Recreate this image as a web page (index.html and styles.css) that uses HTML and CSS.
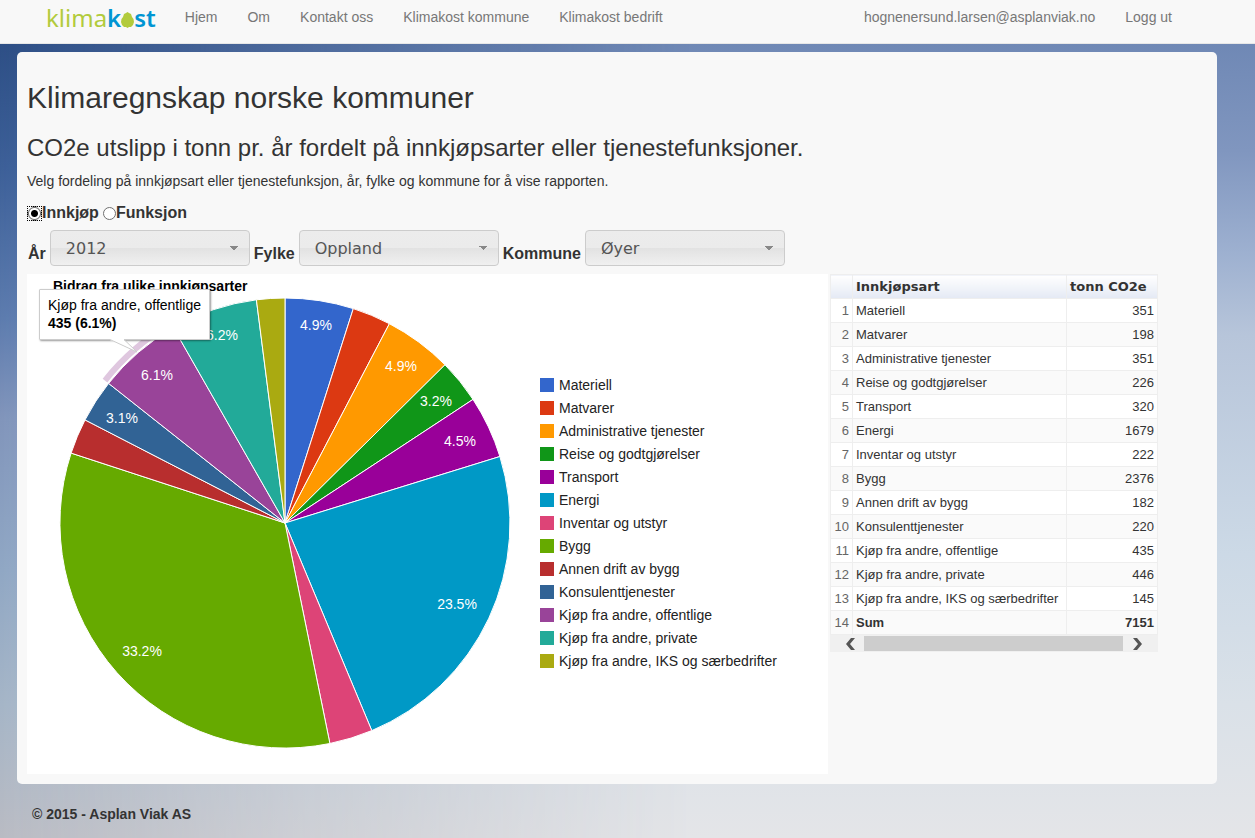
FILE: index.html
```html
<!DOCTYPE html>
<html lang="no">
<head>
<meta charset="utf-8">
<title>Klimakost</title>
<link rel="stylesheet" href="styles.css">
</head>
<body>
<header class="navbar">
  <a class="brand" href="#" aria-label="klimakost"><span class="brand-green">klima</span><span class="brand-blue">k</span><svg class="leaf" viewBox="0 0 13 16" aria-hidden="true"><path d="M6.5 0L8 1L10 2L11 5L12.500 7L13 10L12 13L10 15H8L6.500 16L5 15H3L1 13L0 10L.5 7L2 5L3 2L5 1Z"/></svg><span class="brand-blue">st</span></a>
  <nav class="nav-main">
    <a href="#">Hjem</a>
    <a href="#">Om</a>
    <a href="#">Kontakt oss</a>
    <a href="#">Klimakost kommune</a>
    <a href="#">Klimakost bedrift</a>
  </nav>
  <nav class="nav-user">
    <a href="#">hognenersund.larsen@asplanviak.no</a>
    <a href="#">Logg ut</a>
  </nav>
</header>
<main class="panel">
  <h1>Klimaregnskap norske kommuner</h1>
  <h2>CO2e utslipp i tonn pr. år fordelt på innkjøpsarter eller tjenestefunksjoner.</h2>
  <p class="intro">Velg fordeling på innkjøpsart eller tjenestefunksjon, år, fylke og kommune for å vise rapporten.</p>
  <form>
    <div class="choices">
      <input class="focused" type="radio" name="kind" id="kind-purchase" checked><label for="kind-purchase">Innkjøp</label>
      <input class="second" type="radio" name="kind" id="kind-function"><label for="kind-function">Funksjon</label>
    </div>
    <div class="filters">
      <label for="year">År</label>
      <select id="year"><option>2012</option></select>
      <label for="county">Fylke</label>
      <select id="county"><option>Oppland</option></select>
      <label for="municipality">Kommune</label>
      <select id="municipality"><option>Øyer</option></select>
    </div>
  </form>
  <div class="report">
    <section class="chart">
      <h3>Bidrag fra ulike innkjøpsarter</h3>
      <div class="chart-body">
        <svg class="pie" viewBox="-233 -233 466 466" role="img" aria-label="Bidrag fra ulike innkjøpsarter">
          <path class="halo" d="M-180-142.4A229.5 229.5 0 0 1-113.9-199.3"/>
          <g class="slices">
            <path fill="#3366cc" d="M0 0V-225A225 225 0 0 1 68.3-214.4Z"/>
            <path fill="#dc3912" d="M0 0L68.3-214.4A225 225 0 0 1 104.4-199.3Z"/>
            <path fill="#ff9900" d="M0 0L104.4-199.3A225 225 0 0 1 160-158.2Z"/>
            <path fill="#109618" d="M0 0L160-158.2A225 225 0 0 1 188-123.6Z"/>
            <path fill="#990099" d="M0 0L188-123.6A225 225 0 0 1 214.9-66.5Z"/>
            <path fill="#0099c6" d="M0 0L214.9-66.5A225 225 0 0 1 86.8 207.6Z"/>
            <path fill="#dd4477" d="M0 0L86.8 207.6A225 225 0 0 1 44.9 220.5Z"/>
            <path fill="#66aa00" d="M0 0L44.9 220.5A225 225 0 0 1-213.9-69.9Z"/>
            <path fill="#b82e2e" d="M0 0L-213.9-69.9A225 225 0 0 1-200-103.1Z"/>
            <path fill="#316395" d="M0 0L-200-103.1A225 225 0 0 1-176.4-139.6Z"/>
            <path fill="#994499" d="M0 0L-176.4-139.6A225 225 0 0 1-111.6-195.3Z"/>
            <path fill="#22aa99" d="M0 0L-111.6-195.3A225 225 0 0 1-28.6-223.2Z"/>
            <path fill="#aaaa11" d="M0 0L-28.6-223.2A225 225 0 0 1 0-225Z"/>
          </g>
          <g class="shares">
            <text x="31" y="-193">4.9%</text>
            <text x="116" y="-152">4.9%</text>
            <text x="151" y="-117">3.2%</text>
            <text x="175" y="-77">4.5%</text>
            <text x="172" y="86">23.5%</text>
            <text x="-143" y="133">33.2%</text>
            <text x="-163" y="-100">3.1%</text>
            <text x="-128" y="-143">6.1%</text>
            <text x="-63" y="-183">6.2%</text>
          </g>
        </svg>
        <ul class="legend">
          <li><i class="key k1"></i>Materiell</li>
          <li><i class="key k2"></i>Matvarer</li>
          <li><i class="key k3"></i>Administrative tjenester</li>
          <li><i class="key k4"></i>Reise og godtgjørelser</li>
          <li><i class="key k5"></i>Transport</li>
          <li><i class="key k6"></i>Energi</li>
          <li><i class="key k7"></i>Inventar og utstyr</li>
          <li><i class="key k8"></i>Bygg</li>
          <li><i class="key k9"></i>Annen drift av bygg</li>
          <li><i class="key k10"></i>Konsulenttjenester</li>
          <li><i class="key k11"></i>Kjøp fra andre, offentlige</li>
          <li><i class="key k12"></i>Kjøp fra andre, private</li>
          <li><i class="key k13"></i>Kjøp fra andre, IKS og særbedrifter</li>
        </ul>
      </div>
      <div class="tooltip" role="tooltip">Kjøp fra andre, offentlige<br><b>435 (6.1%)</b>
        <svg class="pointer" viewBox="0 0 30 16" aria-hidden="true"><path class="pointer-fill" d="M0 0H14V2L27 14L0 2Z"/><path class="pointer-line" d="M0 1.5L27 14L14 1.5"/></svg>
      </div>
    </section>
    <div class="grid">
      <table>
        <thead><tr><th></th><th>Innkjøpsart</th><th>tonn CO2e</th></tr></thead>
        <tbody>
          <tr><td>1</td><td>Materiell</td><td>351</td></tr>
          <tr><td>2</td><td>Matvarer</td><td>198</td></tr>
          <tr><td>3</td><td>Administrative tjenester</td><td>351</td></tr>
          <tr><td>4</td><td>Reise og godtgjørelser</td><td>226</td></tr>
          <tr><td>5</td><td>Transport</td><td>320</td></tr>
          <tr><td>6</td><td>Energi</td><td>1679</td></tr>
          <tr><td>7</td><td>Inventar og utstyr</td><td>222</td></tr>
          <tr><td>8</td><td>Bygg</td><td>2376</td></tr>
          <tr><td>9</td><td>Annen drift av bygg</td><td>182</td></tr>
          <tr><td>10</td><td>Konsulenttjenester</td><td>220</td></tr>
          <tr><td>11</td><td>Kjøp fra andre, offentlige</td><td>435</td></tr>
          <tr><td>12</td><td>Kjøp fra andre, private</td><td>446</td></tr>
          <tr><td>13</td><td>Kjøp fra andre, IKS og særbedrifter</td><td>145</td></tr>
          <tr class="sum"><td>14</td><td>Sum</td><td>7151</td></tr>
        </tbody>
      </table>
      <div class="scrollbar">
        <button type="button" aria-label="Rull til venstre"><svg viewBox="0 0 12 12"><path d="M10 0H6L1 6L6 12H10L5 6Z"/></svg></button>
        <div class="thumb"></div>
        <button type="button" aria-label="Rull til høyre"><svg viewBox="0 0 12 12"><path d="M2 0H6L11 6L6 12H2L7 6Z"/></svg></button>
      </div>
    </div>
  </div>
</main>
<footer>© 2015 - Asplan Viak AS</footer>
</body>
</html>
```
FILE: styles.css
```css
* { box-sizing: border-box; }
body {
  position: relative;
  margin: 0;
  min-height: 100vh;
  font: 14px/20px "Liberation Sans", Arial, sans-serif;
  color: #333;
  background: linear-gradient(#6f88b5 5%, #8096bf 18%, #9db0d0 30%, #b7c5da 40%, #ccd9e6 66%, #dae1e8 84%, #e4e5e8 100%);
}
/* darker sky fading in from the left edge */
body::before {
  content: "";
  position: absolute;
  inset: 0;
  z-index: -1;
  background: linear-gradient(#2d4e85 5%, #3c5f98 20%, #5c7bae 38%, #8195bb 50%, #90a7c4 68%, #a5b5c7 84%, #b9bbc3 100%);
  mask-image: linear-gradient(90deg, #000, rgba(0, 0, 0, .5) 25%, transparent 55%);
}
a { text-decoration: none; }

.navbar {
  display: flex;
  height: 44px;
  padding: 0 68px 0 46px;
  align-items: flex-start;
  background: #f8f8f8;
  border-bottom: 1px solid #e7e7e7;
}
.brand { display: flex; align-items: flex-start; margin-right: 29px; font: 24px/36px "Noto Sans", sans-serif; }
.brand-green { color: #b2cb3c; }
.brand-blue { color: #0095d3; font-weight: 600; }
.leaf { width: 13px; height: 16px; margin-top: 12px; fill: #b2cb3c; }
.nav-main, .nav-user { display: flex; gap: 30px; padding-top: 7px; }
.nav-user { margin-left: auto; padding-right: 15px; }
.nav-main a, .nav-user a { color: #777; }

.panel {
  margin: 8px 38px 0 17px;
  padding: 30px 10px 10px;
  background: #f8f8f8;
  border-radius: 5px;
}
h1, h2, h3, p, ul { margin: 0; padding: 0; }
h1 { font-size: 30px; line-height: 32px; font-weight: 400; }
h2 { margin-top: 20px; font-size: 24px; line-height: 28px; font-weight: 400; }
.intro { margin-top: 9px; }

.choices { display: flex; align-items: center; margin-top: 12px; font-size: 16px; font-weight: 700; }
.choices input {
  appearance: none;
  width: 13px;
  height: 13px;
  margin: 0 1px;
  border: 1px solid #707070;
  border-radius: 50%;
  background: #fff;
}
.choices input:checked { background: radial-gradient(circle, #000 0 3px, #fff 4px); }
.choices .focused {
  width: 15px;
  height: 15px;
  margin: 0;
  border: 1px dotted #000;
  border-radius: 0;
}
.choices .focused:checked { background: radial-gradient(circle, #000 0 3px, #fff 4px 5px, #707070 6px, #f8f8f8 7px); }
.choices .second { margin: 0 0 0 4px; }

.filters { display: flex; gap: 4px; align-items: flex-end; margin-top: 7px; font-size: 16px; font-weight: 700; }
.filters label { line-height: 24px; }
.filters label:first-child { padding-left: 1px; }
select {
  appearance: none;
  width: 200px;
  height: 36px;
  padding: 0 15px;
  border: 1px solid #ccc;
  border-radius: 4px;
  color: #555;
  font: 16px "DejaVu Sans", Verdana, sans-serif;
  background:
    conic-gradient(from -45deg at 50% 100%, #888 0 90deg, transparent 0) right 11px top 15px / 8px 4px no-repeat,
    linear-gradient(#ececec 0%, #ebebeb 50%, #e2e2e2 51%, #f0f0f0 100%);
}

.report { display: flex; gap: 2px; margin-top: 8px; align-items: flex-start; }
.chart { position: relative; width: 801px; height: 500px; background: #fff; }
h3 { padding: 2px 0 0 26px; font-size: 14px; line-height: 20px; color: #000; }
.chart-body { display: flex; align-items: center; gap: 22px; padding-left: 25px; margin-top: -6px; }
.pie { width: 466px; height: 466px; }
.slices path { stroke: #fff; stroke-width: 1; }
.halo { fill: none; stroke: #dfc7df; stroke-width: 6; }
.shares { fill: #fff; font-size: 14px; text-anchor: middle; }
.legend { list-style: none; color: #222; }
.legend li { display: flex; align-items: center; gap: 5px; height: 23px; white-space: nowrap; }
.key { width: 14px; height: 14px; }
.k1 { background: #3366cc; }
.k2 { background: #dc3912; }
.k3 { background: #ff9900; }
.k4 { background: #109618; }
.k5 { background: #990099; }
.k6 { background: #0099c6; }
.k7 { background: #dd4477; }
.k8 { background: #66aa00; }
.k9 { background: #b82e2e; }
.k10 { background: #316395; }
.k11 { background: #994499; }
.k12 { background: #22aa99; }
.k13 { background: #aaaa11; }

.tooltip {
  position: absolute;
  left: 12px;
  top: 15px;
  padding: 6px 8px 7px;
  border: 1px solid #ccc;
  border-radius: 1px;
  background: #fff;
  box-shadow: 1px 1px 2px rgba(0, 0, 0, .4);
  color: #000;
  line-height: 18px;
  white-space: nowrap;
}
.pointer { position: absolute; left: 70px; top: 48px; width: 30px; height: 16px; }
.pointer-fill { fill: #fff; }
.pointer-line { fill: none; stroke: #ccc; }

.grid { width: 328px; }
table { width: 100%; border-collapse: collapse; font-size: 13px; line-height: 18px; background: #fff; }
th, td { border: 1px solid #eee; padding: 2px 3px; height: 24px; }
th {
  text-align: left;
  font: 700 13px/18px "DejaVu Sans", Verdana, sans-serif;
  background: linear-gradient(#fff, #e4e9f4);
}
th:first-child { width: 22px; }
th:last-child { width: 91px; }
tr:nth-child(even) td { background: #fafafa; }
td:first-child { color: #666; text-align: right; }
td:last-child { text-align: right; }
.sum td + td { font-weight: 700; }
.scrollbar { display: flex; align-items: center; height: 17px; padding: 0 15px; background: #f0f0f0; }
.scrollbar button { display: flex; padding: 0; border: 0; background: none; }
.scrollbar svg { width: 12px; height: 12px; fill: #555; }
.thumb { flex: 1; height: 15px; margin: 0 8px 0 7px; background: #cdcdcd; }

footer { padding: 20px 32px 14px; font-weight: 700; }
```
